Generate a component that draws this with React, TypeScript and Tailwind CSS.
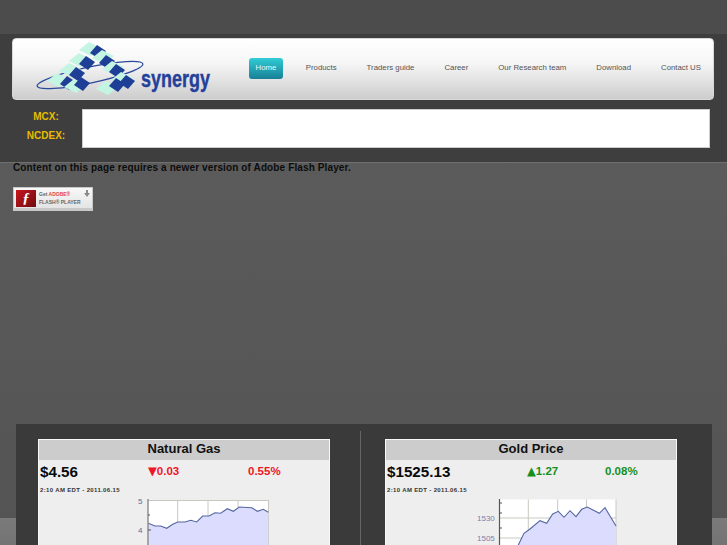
const NAV = ["Products", "Traders guide", "Career", "Our Research team", "Download", "Contact US"];

// mint face centre, navy face centre
const CUBES: [number, number, number, number][] = [
  [90, 49, 98, 52],
  [80, 60, 87, 63],
  [70, 70, 77, 74],
  [58, 80, 68, 83],
  [75, 86, 82, 84],
  [103, 57, 107, 62],
  [113, 68, 117, 71],
  [122, 79, 127, 82],
  [107, 88, 117, 85],
];

const rhomb = (x: number, y: number, rx: number, ry: number) =>
  `${x - rx},${y + 1} ${x - 1},${y - ry} ${x + rx},${y - 1} ${x + 1},${y + ry}`;

function Logo() {
  return (
    <svg width="224" height="62" viewBox="25 38 224 62" className="shrink-0">
      <ellipse cx="90" cy="75" rx="54" ry="8" transform="rotate(-12 90 75)" fill="none" stroke="#2a4a9c" strokeWidth="1.3" />
      {CUBES.map(([mx, my, nx, ny]) => (
        <g key={`${mx}-${my}`}>
          <polygon points={rhomb(mx, my, 11, 7)} fill="#c4f5e2" />
          <polygon points={rhomb(nx, ny, 8, 7)} fill="#1e3f96" />
        </g>
      ))}
      <text x="141" y="87" fontFamily="Liberation Sans, sans-serif" fontWeight="700" fontSize="24" fill="#23409a" stroke="#23409a" strokeWidth="0.4" textLength="69" lengthAdjust="spacingAndGlyphs">
        synergy
      </text>
    </svg>
  );
}

function FlashBadge() {
  return (
    <div className="flex h-[24px] w-[80px] items-center gap-[3px] border border-[#c8c8c8] border-b-[3px] bg-[linear-gradient(#f8f8f8,#e4e4e4)] pl-[2px]">
      <div className="flex h-[17px] w-[20px] items-center justify-center bg-[linear-gradient(135deg,#c8161c,#6e0c10)] font-['Liberation_Serif',serif] text-[15px] font-bold italic leading-none text-white">
        ƒ
      </div>
      <div className="whitespace-nowrap text-[5px] font-bold leading-[8px] text-[#666]">
        <div>
          Get <span className="text-[#e2404a]">ADOBE®</span>
        </div>
        <div>FLASH® PLAYER</div>
      </div>
      <svg width="6" height="7" viewBox="0 0 6 7" className="mb-[10px] shrink-0">
        <path d="M2 0H4V3H6L3 7L0 3H2Z" fill="#8a8a8a" />
      </svg>
    </div>
  );
}

function GasChart() {
  const line = "148.3,523.3 155,526 160.7,526 166.7,528.3 172.7,524.3 177.7,522 185,522 190.7,520.3 196.7,522 202.7,516 209,516 215,512.7 220.7,513.3 227.3,508.7 233.3,511.3 239.3,507 251.7,507.7 257.3,511.3 263.3,509.3 268.3,512.3";
  return (
    <svg width="292" height="60" viewBox="38 496 292 60" className="block">
      <rect x="148" y="500" width="120.5" height="56" fill="#fff" />
      <path d="M148 500.5H268.5M177.7 500V556M208 500V556M238 500V556M268.5 500V556" stroke="#c8c8c0" strokeWidth="1" fill="none" />
      <polygon points={`${line} 268.3,556 148.3,556`} fill="#dcdcff" />
      <polyline points={line} fill="none" stroke="#5468a0" strokeWidth="1.1" />
      <path d="M148 499V556" stroke="#777" strokeWidth="1.2" />
      <path d="M148 530H151M148 515H150" stroke="#555" strokeWidth="1" />
      <text x="138" y="504" fontSize="8" fontFamily="Liberation Sans, sans-serif" fill="#5a6a9c">5</text>
      <text x="138" y="533" fontSize="8" fontFamily="Liberation Sans, sans-serif" fill="#5a6a9c">4</text>
    </svg>
  );
}

function GoldChart() {
  const line = "514,556 518.3,545 524,533.3 530,529 540,520.7 546.7,523.3 552.7,514 558.3,511.3 564,517.3 570,510.7 576,516.7 581.7,509.3 587.3,507 599.3,513.3 605,507.7 616,526";
  return (
    <svg width="292" height="60" viewBox="385 496 292 60" className="block">
      <rect x="499.5" y="499.5" width="116.5" height="56.5" fill="#fff" />
      <path d="M528.3 499.5V556M557.7 499.5V556M586.5 499.5V556M616 499.5V556M499.5 518H616M499.5 538H616" stroke="#c8c8c0" strokeWidth="1" fill="none" />
      <polygon points={`${line} 616,556`} fill="#dcdcff" />
      <polyline points={line} fill="none" stroke="#5468a0" strokeWidth="1.1" />
      <path d="M499.5 499V556" stroke="#555" strokeWidth="1.2" />
      <path d="M499.5 503H502M499.5 513H502M499.5 528H502M511 553H513" stroke="#555" strokeWidth="1" />
      <text x="477" y="521" fontSize="8" fontFamily="Liberation Sans, sans-serif" fill="#7f7fac">1530</text>
      <text x="477" y="541" fontSize="8" fontFamily="Liberation Sans, sans-serif" fill="#7f7fac">1505</text>
    </svg>
  );
}

type QuoteProps = {
  title: string;
  price: string;
  arrow: string;
  change: string;
  pct: string;
  priceW: string;
  changeW: string;
  color: string;
  chart: React.ReactNode;
};

function Quote({ title, price, arrow, change, pct, priceW, changeW, color, chart }: QuoteProps) {
  return (
    <div className="h-[200px] w-[292px] shrink-0 border border-[#f8f8f8] bg-[#eeeeee]">
      <div className="flex h-[20px] items-center justify-center bg-[#cccccc] pb-[2px] text-[13px] font-bold text-[#111]">
        {title}
      </div>
      <div className="flex h-[24px] items-center pl-[1px]">
        <div className={`${priceW} text-[15.2px] font-bold text-[#0a0a0a]`}>{price}</div>
        <div className={`${changeW} flex items-center text-[11.5px] font-bold ${color}`}>
          <span className="-mt-[1px] font-['DejaVu_Sans',sans-serif] text-[11.5px] leading-none">{arrow}</span>
          {change}
        </div>
        <div className={`text-[11.5px] font-bold ${color}`}>{pct}</div>
      </div>
      <div className="mt-[2px] pl-[1px] text-[6px] font-bold leading-[8px] tracking-[0.35px] text-[#333]">
        2:10 AM EDT - 2011.06.15
      </div>
      <div className="-mx-px mt-[2px]">{chart}</div>
    </div>
  );
}

export default function App() {
  return (
    <div className="h-[545px] w-[727px] overflow-hidden bg-[linear-gradient(#5e5e5e_0,#545454_518px,#7a7a7a_518px,#747474_545px)] font-['Liberation_Sans',sans-serif]">
      <div className="h-[34px] bg-[#4c4c4c]" />

      <div className="h-[128px] bg-[#3e3e3e] px-[12px] pt-[4px]">
        <div className="flex h-[62px] w-[702px] items-center rounded-[4px] border border-[#d8d8d8] bg-[linear-gradient(#ffffff_0,#f6f6f6_40%,#cdcdcd_100%)] pl-[12px]">
          <Logo />
          <nav className="-mt-[2px] flex items-center gap-4 text-[7.8px] text-[#555]">
            <a className="flex h-[21px] items-center rounded-[3px] bg-[linear-gradient(#30ccd6,#187f96)] px-[6.5px] text-[#e8fbfc]">
              Home
            </a>
            {NAV.map((item) => (
              <a key={item} className="whitespace-nowrap px-[7px]">
                {item}
              </a>
            ))}
          </nav>
        </div>
        <div className="mt-[9px] flex">
          <div className="-mt-[2px] mr-[2px] flex w-[68px] flex-col items-center text-[10px] font-bold leading-[19px] text-[#e8bc00]">
            <div>MCX:</div>
            <div>NCDEX:</div>
          </div>
          <div className="h-[39px] w-[628px] border border-[#ccc] bg-white" />
        </div>
      </div>

      <div className="border-t border-[#707070] pl-[13px]">
        <p className="text-[10px] font-bold leading-[10px] tracking-[0.12px] text-[#0c0c0c]">
          Content on this page requires a newer version of Adobe Flash Player.
        </p>
        <div className="mt-[14px]">
          <FlashBadge />
        </div>
      </div>

      <div className="ml-[16px] mt-[213px] flex h-[121px] w-[696px] overflow-hidden bg-[#3a3a3a] pl-[22px] pt-[15px]">
        <Quote
          title="Natural Gas"
          price="$4.56"
          arrow="▼"
          change="0.03"
          pct="0.55%"
          priceW="w-[108px]"
          changeW="w-[100px]"
          color="text-[#f01526]"
          chart={<GasChart />}
        />
        <div className="-mt-[8px] ml-[30px] mr-[24px] h-[200px] w-px shrink-0 bg-[#666]" />
        <Quote
          title="Gold Price"
          price="$1525.13"
          arrow="▲"
          change="1.27"
          pct="0.08%"
          priceW="w-[140px]"
          changeW="w-[78px]"
          color="text-[#14901e]"
          chart={<GoldChart />}
        />
      </div>
    </div>
  );
}
